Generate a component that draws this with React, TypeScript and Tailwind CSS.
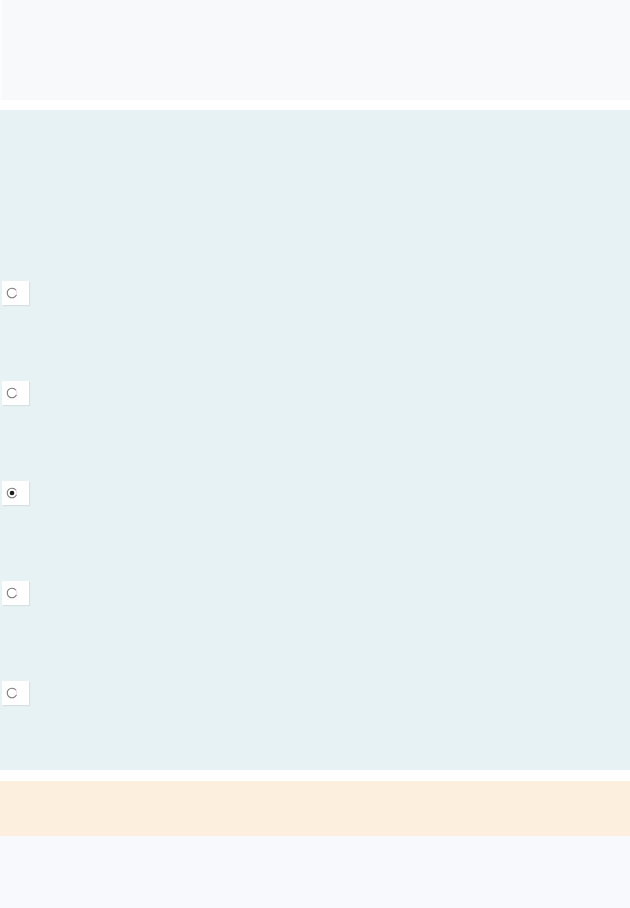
import React from 'react';

const rows = [false, false, true, false, false];

function Radio({ checked }: { checked: boolean }) {
  return (
    <div className="ml-[2px] flex h-[24px] w-[27px] items-start bg-white pl-[4px] pt-[6px] shadow-[1px_1px_1px_rgba(0,0,0,0.07)]">
      <svg width="12" height="12" viewBox="0 0 12 12">
        {/* partial ring, open toward lower right */}
        <path
          d="M10.4 8 A4.8 4.8 0 1 1 9.8 3"
          fill="none"
          stroke="#7a7a7a"
          strokeWidth="1.1"
          strokeLinecap="round"
        />
        <path d="M9.8 3 A4.8 4.8 0 0 1 10.4 8" fill="none" stroke="#e2e2e2" strokeWidth="1" />
        {checked && <circle cx="6" cy="6" r="2.3" fill="#1c1c1c" />}
      </svg>
    </div>
  );
}

export default function App() {
  return (
    <div className="flex h-[908px] w-[630px] flex-col bg-white font-['Liberation_Sans',sans-serif]">
      {/* top panel */}
      <div className="h-[100px] border-l-[2px] border-[#fbfcfd] bg-[#f8f9fb]" />

      {/* question panel */}
      <div className="mt-[10px] flex h-[660px] flex-col gap-[76px] bg-[#e7f2f4] pt-[171px]">
        {rows.map((checked, i) => (
          <Radio key={i} checked={checked} />
        ))}
      </div>

      {/* notice bar */}
      <div className="mt-[11px] h-[55px] bg-[#fcefde]" />

      {/* bottom panel */}
      <div className="flex-1 bg-[#f7f9fc]" />
    </div>
  );
}
